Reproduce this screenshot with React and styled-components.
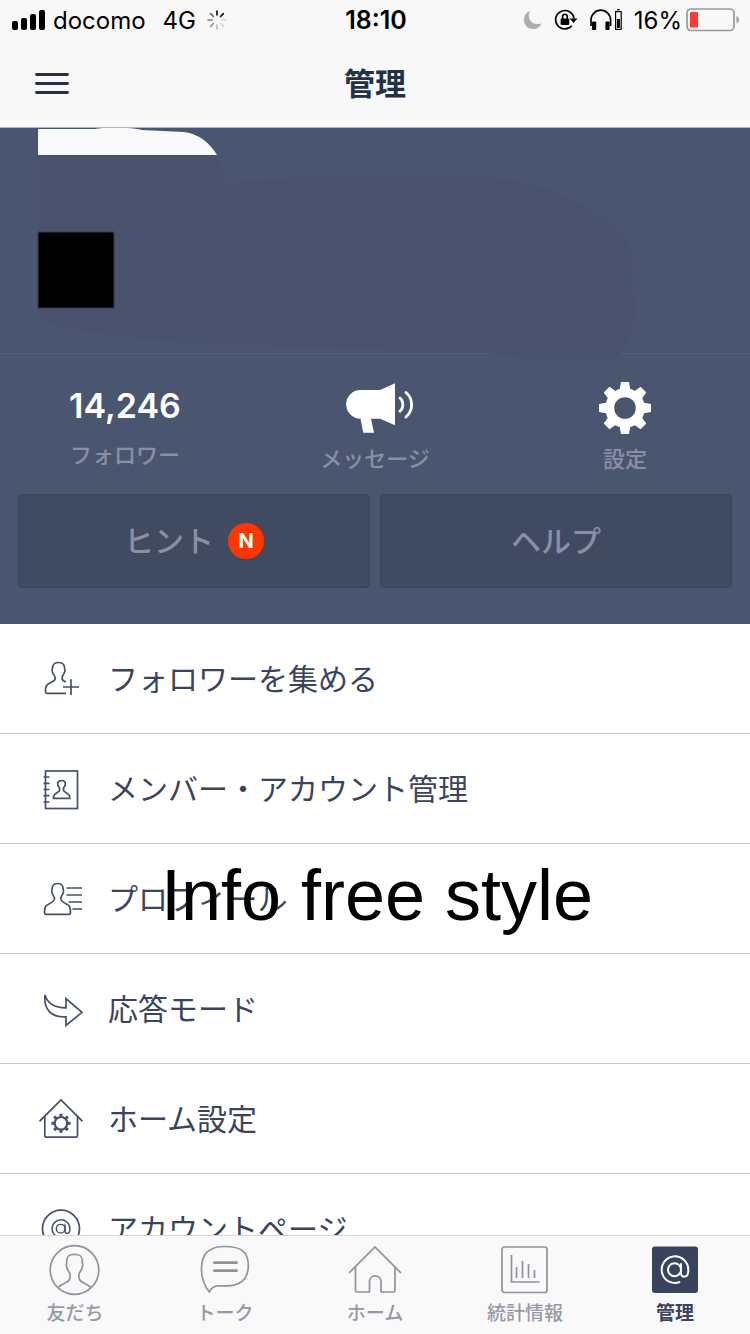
import React from "react";
import styled, { createGlobalStyle } from "styled-components";

const teeth = [0, 45, 90, 135, 180, 225, 270, 315];

/* status bar icons */
const SignalIcon = () => (
  <svg width="34" height="20" viewBox="0 0 34 20">
    <rect x="0" y="11" width="6" height="9" rx="2" />
    <rect x="9" y="8" width="6" height="12" rx="2" />
    <rect x="18" y="4" width="6" height="16" rx="2" />
    <rect x="27" y="0" width="6" height="20" rx="2" />
  </svg>
);

const SpinnerIcon = () => (
  <svg width="20" height="20" viewBox="-10 -10 20 20">
    {[1, 0.95, 0.12, 0.15, 0.25, 0.4, 0.5, 0.6].map((opacity, i) => (
      <path
        key={i}
        d="M0-5V-9"
        stroke="#000"
        strokeWidth="1.6"
        strokeLinecap="round"
        opacity={opacity}
        transform={`rotate(${i * 45})`}
      />
    ))}
  </svg>
);

const MoonIcon = () => (
  <svg width="20" height="20" viewBox="0 0 20 20">
    <path
      d="M7 1C2.500 3 .5 7 1 11C1.500 16 5.500 19 10 19C14 19 17.300 17 18.700 13.200C14 15 9.500 14 7.200 10.500C5.300 7.500 5.300 4 7 1Z"
      fill="#adadad"
    />
  </svg>
);

const RotationLockIcon = () => (
  <svg width="24" height="22" viewBox="0 0 24 22">
    <path
      d="M17.800 16.800A9.200 9.200 0 1 1 20 9.500"
      fill="none"
      stroke="#000"
      strokeWidth="1.700"
    />
    <path d="M15.500 9.500H23.500L19.600 14Z" />
    <rect x="6.600" y="9.500" width="8.600" height="6.500" rx="1" />
    <path d="M8.600 10V7.500A2.300 2.300 0 0 1 13.200 7.500V10" fill="none" stroke="#000" strokeWidth="1.600" />
  </svg>
);

const HeadphoneIcon = () => (
  <svg width="34" height="22" viewBox="0 0 34 22">
    <path d="M2 17V11A9.800 9.800 0 0 1 21.600 11V17" fill="none" stroke="#000" strokeWidth="1.700" />
    <rect x="3" y="12.500" width="4.200" height="8.500" rx="1" />
    <rect x="16.400" y="12.500" width="4.200" height="8.500" rx="1" />
    <rect x="26.600" y="2.600" width="5.600" height="17.800" fill="none" stroke="#000" strokeWidth="1.200" />
    <rect x="27.900" y="10" width="3" height="9" />
    <rect x="28.100" y="0" width="2.600" height="1.400" />
  </svg>
);

const BatteryIcon = () => (
  <svg width="54" height="24" viewBox="0 0 54 24">
    <rect x="1" y="1" width="47" height="21.500" rx="4" fill="none" stroke="#999" strokeWidth="1.700" />
    <rect x="4" y="4" width="8" height="15.500" rx="1" fill="#ff3b30" />
    <path d="M50.500 8C52.300 9 53 10.300 53 11.800C53 13.300 52.300 14.600 50.500 15.500Z" fill="#999" />
  </svg>
);

const MenuIcon = () => (
  <svg width="34" height="24" viewBox="0 0 34 24">
    <path d="M1.500 2.500H32.500M1.500 11.500H32.500M1.500 20.500H32.500" stroke="#252f49" strokeWidth="2.800" strokeLinecap="round" />
  </svg>
);

/* profile panel drawings */
const CoverArt = () => (
  <CoverDrawing width="640" height="232" viewBox="0 0 640 232">
    <path
      d="M38 27H220Q222 44 224 56C260 51 300 50 350 50H490C550 54 600 84 620 104C636 122 634 140 630 154C640 180 636 210 615 231H530C500 222 400 222 240 217C140 213 80 204 38 192Z"
      fill="#4a526e"
    />
    <path d="M38 1H95C104 -1 130 -1 142 2L184 4C199 6 210 15 217 27H38Z" fill="#f9f9fa" />
    <rect x="38" y="104" width="76" height="76" stroke="#343b4e" strokeWidth="1" />
  </CoverDrawing>
);

const MegaphoneIcon = () => (
  <svg width="76" height="52" viewBox="-3 0 76 52">
    <path
      d="M20.500 8H40L55 1.300V43.300L40 36.700H31L34 50.700H23.300L20.500 36.700A14.350 14.350 0 0 1 20.500 8Z"
      fill="#fff"
    />
    <path
      d="M60 16C63.800 19 63.800 26.200 60 29.200M66 10.500C73.500 17 73.500 28.500 66 35"
      fill="none"
      stroke="#fff"
      strokeWidth="2.800"
      strokeLinecap="round"
    />
  </svg>
);

const GearIcon = () => (
  <svg width="52" height="52" viewBox="-26 -26 52 52">
    <circle r="15.300" fill="none" stroke="#fff" strokeWidth="9" />
    {teeth.map((deg) => (
      <path key={deg} d="M-5.500-17.500L-4-26H4L5.500-17.500Z" fill="#fff" transform={`rotate(${deg})`} />
    ))}
  </svg>
);

const AtMark = (props) => (
  <g {...props}>
    <circle cx="15.500" cy="16" r="6.500" />
    <path d="M22 9.500V19.500C22 24.500 29.300 24.500 29.300 17V16A13.300 13.300 0 1 0 21.200 28.200" />
  </g>
);

/* menu icons */
const AddFollowerIcon = () => (
  <LineIcon viewBox="0 0 44 44">
    <path d="M27 36.300H7.500Q6.500 36.300 6.500 34.500V32C6.500 26.500 12 26 15.300 23.500C17.300 21.500 16 19 14 16.500C12 13.500 13.500 11.500 13.800 9.500C14.300 6.500 16 5.500 19.500 5.500C23 5.500 24.800 6.500 25.300 9.500C25.600 11.500 27 13.500 25 16.500C22.500 20 21.500 23 27 25" />
    <path d="M24 30H40M32 22.300V38" />
  </LineIcon>
);

const MemberIcon = () => (
  <LineIcon viewBox="0 0 44 44">
    <rect x="6.500" y="4" width="32" height="37.500" />
    <path d="M4.500 10H10.500M4.500 16.300H10.500M4.500 22.500H10.500M4.500 28.700H10.500M4.500 35H10.500" />
    <path d="M14.500 31.300V29.500C15 26.500 19 26 20.500 23.500V21C17.500 18 18 13.500 22.500 13.500C27 13.500 27.500 18 24.500 21V23.500C26 26 30.500 26.500 30.800 29.500V31.300Z" />
  </LineIcon>
);

const ProfileIcon = () => (
  <LineIcon viewBox="0 0 44 44">
    <path d="M5.500 35.500C5.500 30 6.500 28.500 10 27C14 25 16 23.500 15.500 21C14.800 18.500 12.500 17 12.800 14C13.300 9 13.500 6.500 18.500 6.500C23.500 6.500 24 9 24.500 14C24.800 17 22.300 18.500 21.700 21C21.200 23.500 23.500 25 27.500 27C30.500 28.500 31.500 30 31.500 35.500Q31.500 37.300 30 37.300H7Q5.500 37.300 5.500 35.500Z" />
    <path d="M27.500 11H43M27.500 18H43M29.500 25H43M33.500 32H43" />
  </LineIcon>
);

const ReplyIcon = () => (
  <LineIcon viewBox="0 0 44 44">
    <path d="M6 8C8.500 16.500 15 20.800 27 20.800V11.500L43 25.300L27 38.500V29.800C12 30.500 4.500 22.500 6 8Z" />
  </LineIcon>
);

const HomeGearIcon = () => (
  <LineIcon viewBox="0 0 44 44">
    <path d="M.5 24.300L22 3L43.500 24.300" />
    <path d="M5.800 19.500V38.500Q5.800 40.200 7.500 40.200H37Q38.500 40.200 38.500 38.500V19.500" />
    <circle cx="22" cy="26.300" r="6.300" strokeWidth="2.200" />
    {teeth.map((deg) => (
      <path key={deg} d="M22 19.500V16.700" strokeWidth="3" transform={`rotate(${deg} 22 26.300)`} />
    ))}
  </LineIcon>
);

const AccountPageIcon = () => (
  <LineIcon viewBox="0 0 44 44">
    <circle cx="22" cy="21.700" r="18.500" />
    <AtMark transform="translate(11.300 11) scale(.67)" strokeWidth="2.200" />
  </LineIcon>
);

/* tab icons */
const FriendsTabIcon = () => (
  <TabIcon viewBox="0 0 54 54">
    <circle cx="26.500" cy="27" r="24.300" />
    <path d="M10.500 44C14 41 20 39.500 21.500 36.500C22.500 33.500 22.500 30.500 20.500 28C18.500 25.500 18 22.500 18.700 20V17.500C19 13 21 11.300 26.500 11.300C32 11.300 34 13 34.300 17.500V20C35 22.500 34.500 25.500 32.500 28C30.500 30.500 30.500 33.500 31.500 36.500C33 39.500 39 41 42.500 44" />
  </TabIcon>
);

const TalkTabIcon = () => (
  <TabIcon viewBox="0 0 54 54">
    <path d="M11.300 49C6.500 43 3.500 34 3.500 26C3.500 10.500 11 3.500 27 3.500C43 3.500 50.300 9 50.300 22C50.300 36 43 42.800 29 42.800H20C15.500 42.800 13.500 44.500 11.300 49Z" />
    <path d="M16.500 19.700H38.500M16.500 27.700H38.500" strokeWidth="2.800" strokeLinecap="round" />
  </TabIcon>
);

const HomeTabIcon = () => (
  <TabIcon viewBox="0 0 54 54">
    <path d="M1 30L27 4L53 30" />
    <path d="M7.500 24V47.500Q7.500 49 9 49H21.500V38.500C21.500 31 33 31 33 38.500V49H45.500Q47 49 47 47.500V24" />
  </TabIcon>
);

const StatsTabIcon = () => (
  <TabIcon viewBox="0 0 54 54">
    <rect x="4" y="4" width="45" height="45.500" rx="2.500" />
    <path d="M13.500 12V39H41.500M18.500 24V35M24.500 18V35M30.500 21V35M36.500 27V35" />
  </TabIcon>
);

const ManageTabIcon = () => (
  <TabIcon viewBox="0 0 54 54">
    <rect x="4" y="3.500" width="46" height="46.500" rx="3" fill="#39435f" stroke="none" />
    <AtMark transform="translate(11 10.700)" stroke="#fff" strokeWidth="2" />
  </TabIcon>
);

const menus = [
  { label: "フォロワーを集める", Icon: AddFollowerIcon },
  { label: "メンバー・アカウント管理", Icon: MemberIcon },
  { label: "プロフィール", Icon: ProfileIcon },
  { label: "応答モード", Icon: ReplyIcon },
  { label: "ホーム設定", Icon: HomeGearIcon },
  { label: "アカウントページ", Icon: AccountPageIcon },
];

const tabs = [
  { label: "友だち", Icon: FriendsTabIcon },
  { label: "トーク", Icon: TalkTabIcon },
  { label: "ホーム", Icon: HomeTabIcon },
  { label: "統計情報", Icon: StatsTabIcon },
  { label: "管理", Icon: ManageTabIcon, active: true },
];

const App = () => {
  return (
    <Screen>
      <GlobalStyle />
      <Header>
        <StatusBar>
          <StatusGroup>
            <SignalIcon />
            <Carrier>docomo</Carrier>
            <Network>4G</Network>
            <SpinnerIcon />
          </StatusGroup>
          <Time>18:10</Time>
          <StatusGroup $end>
            <MoonIcon />
            <RotationLockIcon />
            <HeadphoneIcon />
            <Battery>
              16%
              <BatteryIcon />
            </Battery>
          </StatusGroup>
        </StatusBar>
        <NavBar>
          <MenuButton aria-label="メニュー">
            <MenuIcon />
          </MenuButton>
          <Title>管理</Title>
        </NavBar>
      </Header>
      <Main>
        <Profile>
          <Cover>
            <CoverArt />
          </Cover>
          <Stats>
            <Stat>
              <Count>14,246</Count>
              フォロワー
            </Stat>
            <Stat>
              <MegaphoneIcon />
              メッセージ
            </Stat>
            <Stat>
              <GearIcon />
              設定
            </Stat>
          </Stats>
          <Actions>
            <ActionButton>
              <ActionLabel>ヒント</ActionLabel>
              <Badge>N</Badge>
            </ActionButton>
            <ActionButton>
              <ActionLabel>ヘルプ</ActionLabel>
            </ActionButton>
          </Actions>
        </Profile>
        <MenuList>
          {menus.map(({ label, Icon }) => (
            <li key={label}>
              <MenuItem>
                <Icon />
                <MenuLabel>{label}</MenuLabel>
              </MenuItem>
            </li>
          ))}
          <Overlay>Info free style</Overlay>
        </MenuList>
      </Main>
      <TabBar>
        {tabs.map(({ label, Icon, active }) => (
          <Tab key={label} href="#" $active={active}>
            <Icon />
            {label}
          </Tab>
        ))}
      </TabBar>
    </Screen>
  );
};

export default App;

const GlobalStyle = createGlobalStyle`
  * {
    box-sizing: border-box;
  }
  body {
    margin: 0;
    background-color: white;
    font-family: Inter, "Noto Sans CJK JP", sans-serif;
  }
  button {
    margin: 0;
    padding: 0;
    border: none;
    background: none;
    font-family: inherit;
    cursor: pointer;
  }
  svg {
    display: block;
    flex-shrink: 0;
  }
`;

const Screen = styled.div`
  height: 100vh;
  display: flex;
  flex-direction: column;
`;

const Header = styled.header`
  flex-shrink: 0;
  border-bottom: 1px solid #b4b6bb;
  background-color: #f8f8f8;
`;

const StatusBar = styled.div`
  height: 40px;
  padding: 0 10px 0 12px;
  display: grid;
  grid-template-columns: 1fr auto 1fr;
  align-items: center;
  color: black;
  font-size: 24px;
`;

const StatusGroup = styled.div`
  display: flex;
  align-items: center;
  justify-content: ${({ $end }) => ($end ? "flex-end" : "flex-start")};
  gap: ${({ $end }) => ($end ? "11px" : "7px")};
`;

const Carrier = styled.span`
  margin-right: 10px;
`;

const Network = styled.span`
  margin-right: 4px;
`;

const Time = styled.div`
  font-size: 25px;
  font-weight: 600;
`;

const Battery = styled.div`
  display: flex;
  align-items: center;
  gap: 4px;
`;

const NavBar = styled.div`
  height: 87px;
  padding: 0 35px;
  display: grid;
  grid-template-columns: 1fr auto 1fr;
  align-items: center;
`;

const MenuButton = styled.button`
  justify-self: start;
`;

const Title = styled.h1`
  margin: 0;
  padding-bottom: 4px;
  color: #253047;
  font-size: 31px;
  font-weight: 700;
`;

const Main = styled.main`
  flex: 1;
  min-height: 0;
  overflow-y: auto;
  scrollbar-width: none;
`;

const Profile = styled.section`
  padding-bottom: 36px;
  background-color: #4a556f;
`;

const Cover = styled.div`
  position: relative;
  height: 226px;
  border-bottom: 1px solid #566079;
`;

const CoverDrawing = styled.svg`
  position: absolute;
  top: 0;
  left: 0;
`;

const Stats = styled.div`
  height: 140px;
  padding-top: 28px;
  display: grid;
  grid-template-columns: repeat(3, 1fr);
`;

const Stat = styled.button`
  display: flex;
  flex-direction: column;
  align-items: center;
  gap: 12px;
  color: #8b8fa5;
  font-size: 22px;
  font-weight: 500;
  line-height: 26px;
`;

const Count = styled.span`
  color: white;
  font-size: 34px;
  font-weight: 600;
  line-height: 48px;
`;

const Actions = styled.div`
  padding: 0 18px;
  display: grid;
  grid-template-columns: 1fr 1fr;
  gap: 10px;
`;

const ActionButton = styled.button`
  && {
    height: 94px;
    border: 1px solid #39435a;
    border-radius: 4px;
    background-color: #404a61;
  }
  display: flex;
  justify-content: center;
  align-items: center;
  gap: 14px;
  color: #8b8fa5;
  font-size: 30px;
  font-weight: 500;
`;

const ActionLabel = styled.span`
  padding-bottom: 4px;
`;

const Badge = styled.span`
  width: 36px;
  height: 36px;
  border-radius: 50%;
  display: flex;
  justify-content: center;
  align-items: center;
  background-color: #ff3600;
  color: white;
  font-size: 20px;
  font-weight: 700;
`;

const MenuList = styled.ul`
  position: relative;
  margin: 0;
  padding: 0;
  list-style: none;
`;

const MenuItem = styled.button`
  && {
    width: 100%;
    height: 110px;
    padding: 0 39px;
    border-bottom: 1px solid #c8c8cb;
  }
  display: flex;
  align-items: center;
  gap: 25px;
  color: #3b445e;
  font-size: 30px;
  font-weight: 400;
`;

const MenuLabel = styled.span`
  padding-bottom: 4px;
`;

const LineIcon = styled.svg`
  width: 44px;
  height: 44px;
  fill: none;
  stroke: #465069;
  stroke-width: 1.7;
`;

/* caption over the menu */
const Overlay = styled.li`
  position: absolute;
  top: 230px;
  left: 0;
  right: 0;
  padding-left: 4px;
  color: black;
  font-family: "Liberation Sans", Arial, sans-serif;
  font-size: 72px;
  line-height: 82px;
  text-align: center;
  pointer-events: none;
`;

const TabBar = styled.nav`
  flex-shrink: 0;
  height: 99px;
  padding-top: 7px;
  border-top: 1px solid #d3d5d6;
  display: grid;
  grid-template-columns: repeat(5, 1fr);
  background-color: #f9f9f9;
`;

const Tab = styled.a`
  display: flex;
  flex-direction: column;
  align-items: center;
  color: ${({ $active }) => ($active ? "#39435f" : "#9599a5")};
  font-size: 19px;
  font-weight: ${({ $active }) => ($active ? 700 : 500)};
  line-height: 34px;
  text-decoration: none;
`;

const TabIcon = styled.svg`
  width: 54px;
  height: 54px;
  fill: none;
  stroke: #8f939e;
  stroke-width: 1.7;
`;
